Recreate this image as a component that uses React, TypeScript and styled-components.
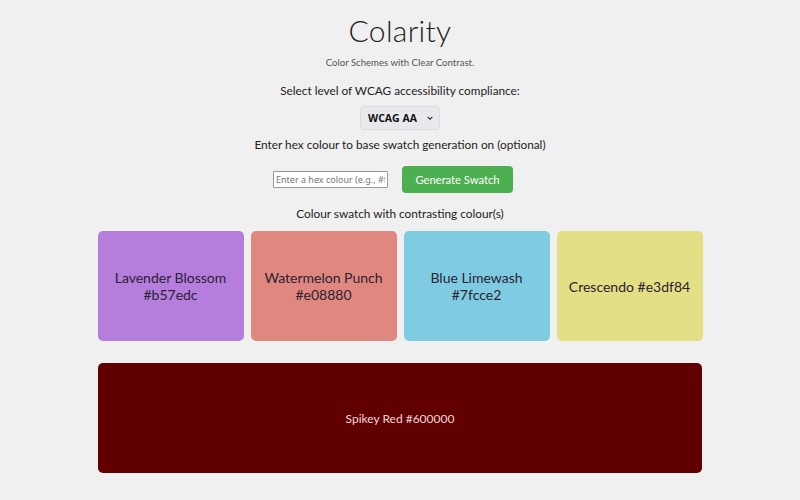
import { createGlobalStyle } from 'styled-components';
import styled from 'styled-components';

const swatches = [
    { name: 'Lavender Blossom', hex: '#b57edc', split: true },
    { name: 'Watermelon Punch', hex: '#e08880', split: true },
    { name: 'Blue Limewash', hex: '#7fcce2', split: true },
    { name: 'Crescendo', hex: '#e3df84', split: false },
];

const GlobalStyle = createGlobalStyle`
    html, body {
        margin: 0;
        padding: 0;
        background: #f0f0f0;
    }
    body {
        font-family: Lato, "Noto Sans", sans-serif;
        color: #222;
    }
`;

export default function App() {
    return (
        <>
            <GlobalStyle />
            <Page>
                <Title>Colarity</Title>
                <Subtitle>Color Schemes with Clear Contrast.</Subtitle>
                <Label $top={13}>Select level of WCAG accessibility compliance:</Label>
                <SelectWrap>
                    <Select defaultValue="AA">
                        <option value="AA">WCAG AA</option>
                        <option value="AAA">WCAG AAA</option>
                    </Select>
                    <Chevron width="8" height="8" viewBox="0 0 10 10">
                        <path d="M2 3.5 L5 6.5 L8 3.5" fill="none" stroke="#333" strokeWidth="1.4" />
                    </Chevron>
                </SelectWrap>
                <Label $top={7}>Enter hex colour to base swatch generation on (optional)</Label>
                <InputRow>
                    <HexInput placeholder="Enter a hex colour (e.g., #ff0000)" />
                    <Button>Generate Swatch</Button>
                </InputRow>
                <Label $top={13}>Colour swatch with contrasting colour(s)</Label>
                <SwatchGrid>
                    {swatches.map(s => (
                        <Swatch key={s.hex} $bg={s.hex}>
                            {s.split ? (
                                <>
                                    {s.name}
                                    <br />
                                    {s.hex}
                                </>
                            ) : (
                                `${s.name} ${s.hex}`
                            )}
                        </Swatch>
                    ))}
                </SwatchGrid>
                <BigSwatch>Spikey Red #600000</BigSwatch>
            </Page>
        </>
    );
}

const Page = styled.div`
    display: flex;
    flex-direction: column;
    align-items: center;
    padding-top: 12px;
    padding-bottom: 20px;
`;

const Title = styled.h1`
    margin: 0;
    font-size: 30px;
    line-height: 36px;
    font-weight: 300;
    color: #222;
    letter-spacing: 0.3px;
`;

const Subtitle = styled.p`
    margin: 8px 0 0;
    font-size: 9.6px;
    line-height: 14px;
    color: #555;
`;

const Label = styled.p<{ $top: number }>`
    margin: ${p => p.$top}px 0 0;
    font-size: 11.8px;
    line-height: 16px;
    color: #222;
`;

const SelectWrap = styled.div`
    position: relative;
    margin-top: 7px;
`;

const Select = styled.select`
    appearance: none;
    width: 80px;
    height: 24px;
    padding: 0 0 0 7px;
    border: 1px solid #dcdce0;
    border-radius: 4px;
    background: #e9e9ed;
    font-family: "Open Sans", sans-serif;
    font-weight: 700;
    font-size: 10.5px;
    color: #111;
`;

const Chevron = styled.svg`
    position: absolute;
    right: 6px;
    top: 8px;
    pointer-events: none;
`;

const InputRow = styled.div`
    display: flex;
    align-items: center;
    gap: 14px;
    margin-top: 13px;
    padding-right: 14px;
`;

const HexInput = styled.input`
    width: 109px;
    height: 15px;
    padding: 0 2px;
    border: 1px solid #999;
    border-radius: 1px;
    background: #fff;
    font-family: "Noto Sans", sans-serif;
    font-size: 9px;
    &::placeholder {
        color: #777;
    }
`;

const Button = styled.button`
    width: 111px;
    height: 27px;
    border: none;
    border-radius: 4px;
    background: #4caf50;
    color: #fff;
    font-family: Lato, sans-serif;
    font-size: 11.2px;
`;

const SwatchGrid = styled.div`
    display: grid;
    grid-template-columns: repeat(4, 146px);
    gap: 7px;
    margin-top: 9px;
`;

const Swatch = styled.div<{ $bg: string }>`
    height: 110px;
    display: flex;
    align-items: center;
    justify-content: center;
    text-align: center;
    border-radius: 5px;
    background: ${p => p.$bg};
    font-size: 14px;
    line-height: 17px;
    color: #2a2233;
`;

const BigSwatch = styled.div`
    width: 604px;
    height: 110px;
    margin-top: 22px;
    display: flex;
    align-items: center;
    justify-content: center;
    border-radius: 5px;
    background: #600000;
    color: #f3d6d6;
    font-size: 12px;
`;
